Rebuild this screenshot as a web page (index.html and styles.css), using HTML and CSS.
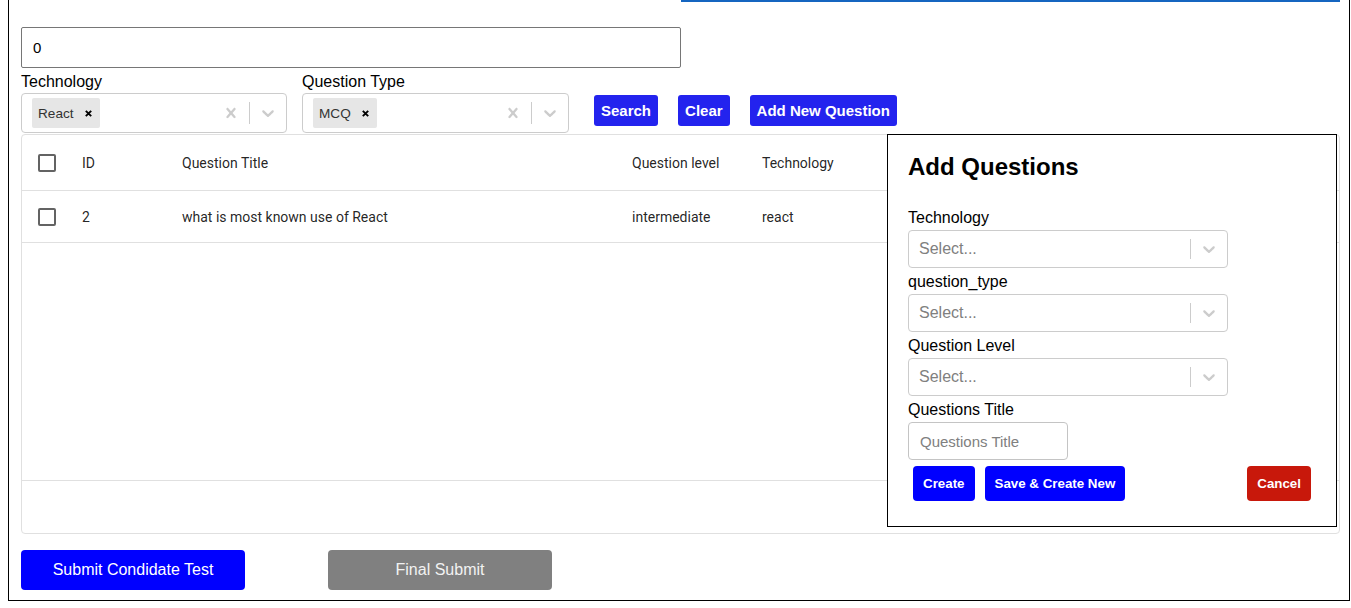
FILE: index.html
```html
<!DOCTYPE html>
<html>
<head>
<meta charset="utf-8">
<link rel="stylesheet" href="styles.css">
</head>
<body>
<div class="page">
  <div class="topbar"><div class="spacer"></div><div class="indicator"></div></div>
  <input class="search-input" type="text" value="0">
  <div class="filters">
    <div class="field">
      <label class="flabel">Technology</label>
      <div class="ms-control">
        <div class="ms-values">
          <div class="chip"><span class="chip-label">React</span><span class="chip-remove"><svg width="7" height="7" viewBox="0 0 7 7"><path d="M0.8 0.8L6.2 6.2M6.2 0.8L0.8 6.2" stroke="#000" stroke-width="1.9"/></svg></span></div>
        </div>
        <div class="ind"><svg width="20" height="20" viewBox="0 0 20 20"><path fill="#ccc" d="M14.348 14.849c-0.469 0.469-1.229 0.469-1.697 0l-2.651-3.030-2.651 3.029c-0.469 0.469-1.229 0.469-1.697 0-0.469-0.469-0.469-1.229 0-1.697l2.758-3.15-2.759-3.152c-0.469-0.469-0.469-1.228 0-1.697s1.228-0.469 1.697 0l2.652 3.031 2.651-3.031c0.469-0.469 1.228-0.469 1.697 0s0.469 1.229 0 1.697l-2.758 3.152 2.758 3.15c0.469 0.469 0.469 1.229 0 1.698z"/></svg></div>
        <div class="sep"></div>
        <div class="ind"><svg width="20" height="20" viewBox="0 0 20 20"><path fill="#ccc" d="M4.516 7.548c0.436-0.446 1.043-0.481 1.576 0l3.908 3.747 3.908-3.747c0.533-0.481 1.141-0.446 1.574 0 0.436 0.445 0.408 1.197 0 1.615-0.406 0.418-4.695 4.502-4.695 4.502-0.217 0.223-0.502 0.335-0.787 0.335s-0.57-0.112-0.789-0.335c0 0-4.287-4.084-4.695-4.502s-0.436-1.170 0-1.615z"/></svg></div>
      </div>
    </div>
    <div class="field">
      <label class="flabel">Question Type</label>
      <div class="ms-control">
        <div class="ms-values">
          <div class="chip"><span class="chip-label">MCQ</span><span class="chip-remove"><svg width="7" height="7" viewBox="0 0 7 7"><path d="M0.8 0.8L6.2 6.2M6.2 0.8L0.8 6.2" stroke="#000" stroke-width="1.9"/></svg></span></div>
        </div>
        <div class="ind"><svg width="20" height="20" viewBox="0 0 20 20"><path fill="#ccc" d="M14.348 14.849c-0.469 0.469-1.229 0.469-1.697 0l-2.651-3.030-2.651 3.029c-0.469 0.469-1.229 0.469-1.697 0-0.469-0.469-0.469-1.229 0-1.697l2.758-3.15-2.759-3.152c-0.469-0.469-0.469-1.228 0-1.697s1.228-0.469 1.697 0l2.652 3.031 2.651-3.031c0.469-0.469 1.228-0.469 1.697 0s0.469 1.229 0 1.697l-2.758 3.152 2.758 3.15c0.469 0.469 0.469 1.229 0 1.698z"/></svg></div>
        <div class="sep"></div>
        <div class="ind"><svg width="20" height="20" viewBox="0 0 20 20"><path fill="#ccc" d="M4.516 7.548c0.436-0.446 1.043-0.481 1.576 0l3.908 3.747 3.908-3.747c0.533-0.481 1.141-0.446 1.574 0 0.436 0.445 0.408 1.197 0 1.615-0.406 0.418-4.695 4.502-4.695 4.502-0.217 0.223-0.502 0.335-0.787 0.335s-0.57-0.112-0.789-0.335c0 0-4.287-4.084-4.695-4.502s-0.436-1.170 0-1.615z"/></svg></div>
      </div>
    </div>
    <div class="actions">
      <button class="btn-top">Search</button>
      <button class="btn-top">Clear</button>
      <button class="btn-top">Add New Question</button>
    </div>
  </div>

  <div class="grid-wrap">
    <div class="grid">
      <div class="grid-head">
        <div class="c c-check"><span class="cb"></span></div>
        <div class="c c-id">ID</div>
        <div class="c c-title">Question Title</div>
        <div class="c c-level">Question level</div>
        <div class="c c-tech">Technology</div>
      </div>
      <div class="grid-body">
        <div class="grid-row">
          <div class="c c-check"><span class="cb"></span></div>
          <div class="c c-id">2</div>
          <div class="c c-title">what is most known use of React</div>
          <div class="c c-level">intermediate</div>
          <div class="c c-tech">react</div>
        </div>
      </div>
      <div class="grid-foot"></div>
    </div>

    <div class="modal">
      <h2 class="modal-title">Add Questions</h2>
      <label class="mlabel">Technology</label>
      <div class="s-control">
        <div class="s-value"><span class="placeholder">Select...</span></div>
        <div class="sep"></div>
        <div class="ind"><svg width="20" height="20" viewBox="0 0 20 20"><path fill="#ccc" d="M4.516 7.548c0.436-0.446 1.043-0.481 1.576 0l3.908 3.747 3.908-3.747c0.533-0.481 1.141-0.446 1.574 0 0.436 0.445 0.408 1.197 0 1.615-0.406 0.418-4.695 4.502-4.695 4.502-0.217 0.223-0.502 0.335-0.787 0.335s-0.57-0.112-0.789-0.335c0 0-4.287-4.084-4.695-4.502s-0.436-1.170 0-1.615z"/></svg></div>
      </div>
      <label class="mlabel">question_type</label>
      <div class="s-control">
        <div class="s-value"><span class="placeholder">Select...</span></div>
        <div class="sep"></div>
        <div class="ind"><svg width="20" height="20" viewBox="0 0 20 20"><path fill="#ccc" d="M4.516 7.548c0.436-0.446 1.043-0.481 1.576 0l3.908 3.747 3.908-3.747c0.533-0.481 1.141-0.446 1.574 0 0.436 0.445 0.408 1.197 0 1.615-0.406 0.418-4.695 4.502-4.695 4.502-0.217 0.223-0.502 0.335-0.787 0.335s-0.57-0.112-0.789-0.335c0 0-4.287-4.084-4.695-4.502s-0.436-1.170 0-1.615z"/></svg></div>
      </div>
      <label class="mlabel">Question Level</label>
      <div class="s-control">
        <div class="s-value"><span class="placeholder">Select...</span></div>
        <div class="sep"></div>
        <div class="ind"><svg width="20" height="20" viewBox="0 0 20 20"><path fill="#ccc" d="M4.516 7.548c0.436-0.446 1.043-0.481 1.576 0l3.908 3.747 3.908-3.747c0.533-0.481 1.141-0.446 1.574 0 0.436 0.445 0.408 1.197 0 1.615-0.406 0.418-4.695 4.502-4.695 4.502-0.217 0.223-0.502 0.335-0.787 0.335s-0.57-0.112-0.789-0.335c0 0-4.287-4.084-4.695-4.502s-0.436-1.170 0-1.615z"/></svg></div>
      </div>
      <label class="mlabel">Questions Title</label>
      <input class="title-input" type="text" placeholder="Questions Title">
      <div class="modal-actions">
        <button class="mbtn mbtn-blue">Create</button>
        <button class="mbtn mbtn-blue">Save &amp; Create New</button>
        <span class="grow"></span>
        <button class="mbtn mbtn-red">Cancel</button>
      </div>
    </div>
  </div>

  <div class="bottom">
    <button class="bbtn bbtn-blue">Submit Condidate Test</button>
    <button class="bbtn bbtn-gray">Final Submit</button>
  </div>
</div>
</body>
</html>
```

FILE: styles.css
```css
* { box-sizing: border-box; }
html, body { margin: 0; padding: 0; background: #fff; }
body { font-family: "Liberation Sans", Arial, sans-serif; color: #000; }

.page {
  margin: 0 1px 0 8px;
  border: 1px solid #000;
  border-top: none;
  padding: 0 9px 10px 12px;
}

.topbar { display: flex; height: 2px; }
.topbar .spacer { width: 660px; }
.topbar .indicator { flex: 1; background: #1565c0; }

.search-input {
  display: block;
  margin-top: 25px;
  width: 660px;
  height: 41px;
  border: 1px solid #767676;
  border-radius: 2px;
  padding: 0 11px;
  font-family: "Liberation Sans", Arial, sans-serif;
  font-size: 15px;
  color: #000;
  outline: none;
}

.filters { display: flex; align-items: flex-end; }
.field { display: flex; flex-direction: column; width: 266px; margin-right: 15px; }
.field + .field { width: 267px; margin-right: 25px; }
.flabel { font-size: 16px; line-height: 22px; margin-top: 3px; }

.ms-control {
  display: flex;
  align-items: stretch;
  height: 40px;
  border: 1px solid #ccc;
  border-radius: 4px;
  background: #fff;
}
.ms-values { flex: 1; display: flex; align-items: center; padding: 0 10px; }
.chip {
  display: flex;
  align-items: center;
  height: 30px;
  background: #e6e6e6;
  border-radius: 2px;
}
.chip-label { font-size: 13.6px; color: #333; padding: 0 6px; }
.chip-remove { display: flex; align-items: center; padding: 0 8px 0 5px; }
.ind { display: flex; align-items: center; padding: 0 8px; }
.ind svg { display: block; }
.sep { width: 1px; background: #ccc; margin: 8px 0; }

.actions { display: flex; gap: 20px; margin-bottom: 7px; }
.btn-top {
  height: 31px;
  padding: 0 7px;
  border: none;
  border-radius: 3px;
  background: #2323ee;
  color: #fff;
  font-family: "Liberation Sans", Arial, sans-serif;
  font-weight: bold;
  font-size: 15px;
}

.grid-wrap { position: relative; margin-top: 1px; }
.grid {
  height: 400px;
  border: 1px solid #e0e0e0;
  border-radius: 4px;
  display: flex;
  flex-direction: column;
  font-family: Roboto, "Liberation Sans", sans-serif;
  font-size: 14px;
  color: rgba(0,0,0,0.87);
}
.grid-head { display: flex; height: 56px; border-bottom: 1px solid #e0e0e0; }
.grid-body { flex: 1; }
.grid-row { display: flex; height: 52px; border-bottom: 1px solid #e0e0e0; }
.grid-foot { height: 53px; border-top: 1px solid #e0e0e0; }
.c { display: flex; align-items: center; padding: 0 10px; white-space: nowrap; }
.c-check { width: 50px; justify-content: center; padding: 0; }
.c-id { width: 100px; }
.c-title { width: 450px; }
.c-level { width: 130px; }
.c-tech { flex: 1; }
.cb {
  display: block;
  width: 18px;
  height: 18px;
  border: 2px solid #636363;
  border-radius: 2px;
}

.modal {
  position: absolute;
  top: 0;
  right: 3px;
  width: 450px;
  background: #fff;
  border: 1px solid #000;
  padding: 18px 20px 20px;
  font-family: "Liberation Sans", Arial, sans-serif;
}
.modal-title { margin: 0 0 28px; font-size: 24px; line-height: 28px; font-weight: bold; }
.mlabel { display: block; font-size: 16px; line-height: 18px; margin: 5px 0 3px; }
.s-control {
  display: flex;
  width: 320px;
  height: 38px;
  border: 1px solid #ccc;
  border-radius: 4px;
}
.s-value { flex: 1; display: flex; align-items: center; padding: 0 10px; }
.placeholder { color: #808080; font-size: 16px; }
.title-input {
  display: block;
  width: 160px;
  height: 38px;
  border: 1px solid #c4c4c4;
  border-radius: 4px;
  padding: 0 11px;
  font-family: "Liberation Sans", Arial, sans-serif;
  font-size: 15px;
  outline: none;
}
.title-input::placeholder { color: #808080; }
.modal-actions { display: flex; margin-top: 1px; }
.grow { flex: 1; }
.mbtn {
  height: 35px;
  margin: 5px;
  padding: 0 10px;
  border: none;
  border-radius: 4px;
  color: #fff;
  font-family: "Liberation Sans", Arial, sans-serif;
  font-weight: bold;
  font-size: 13.333px;
}
.mbtn-blue { background: #0000ff; }
.mbtn-red { background: #c8180b; }

.bottom { display: flex; gap: 83px; margin-top: 16px; }
.bbtn {
  width: 224px;
  height: 40px;
  border: none;
  border-radius: 4px;
  font-family: "Liberation Sans", Arial, sans-serif;
  font-size: 16px;
}
.bbtn-blue { background: #0000ff; color: #fff; }
.bbtn-gray { background: #808080; color: #f2f2f2; }
```
